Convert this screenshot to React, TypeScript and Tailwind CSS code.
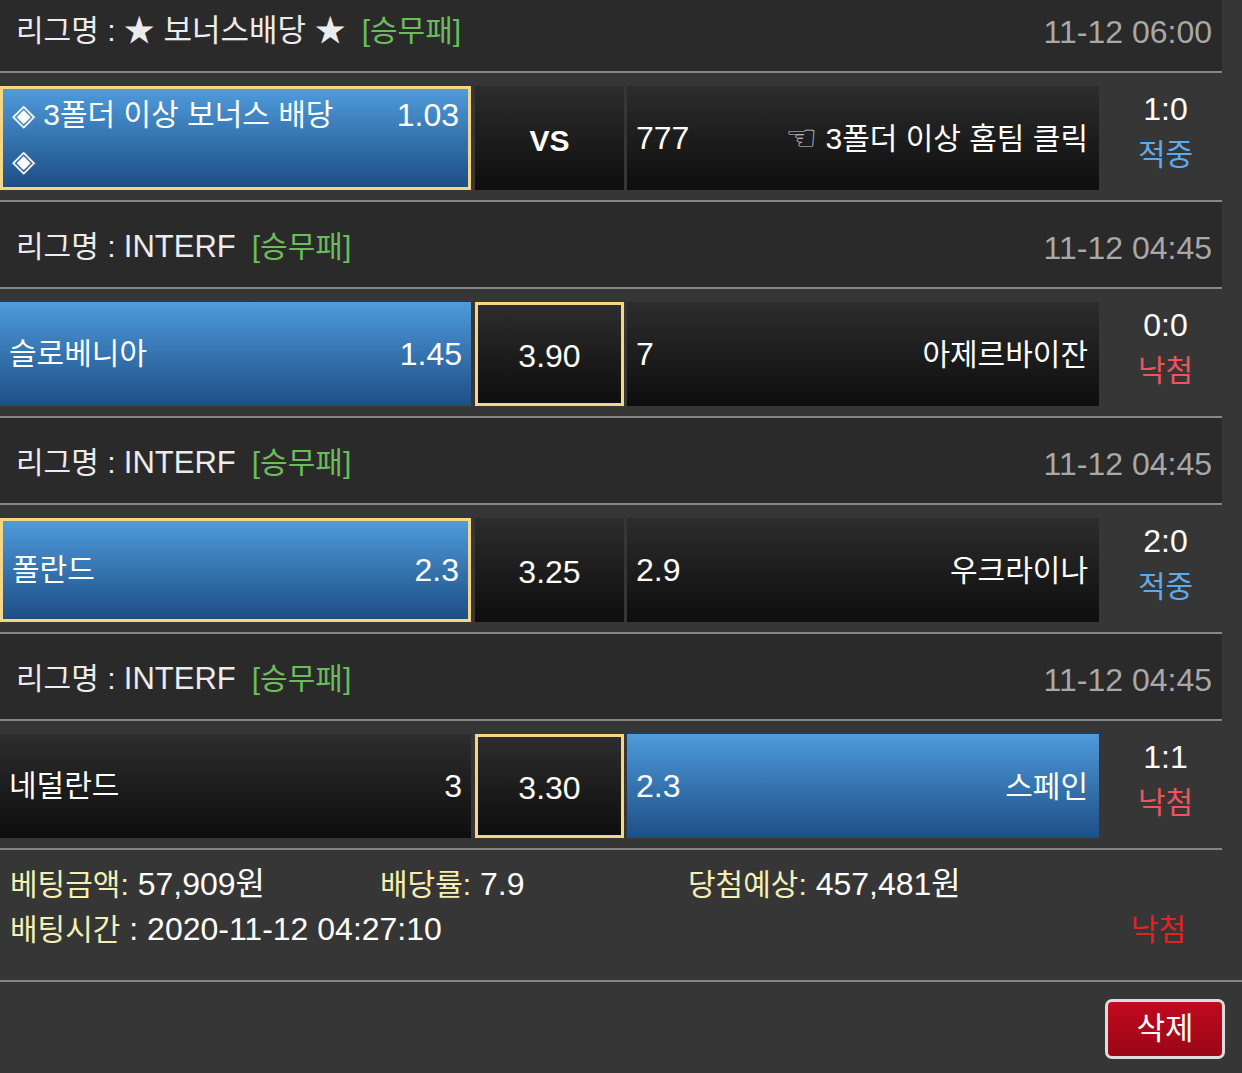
import React from 'react'

type Side = 'home' | 'draw' | 'away'

type Game = {
  league: string
  time: string
  home: string
  homeOdds: string
  draw: string
  away: string
  awayOdds: string
  score: string
  result: '적중' | '낙첨'
  pick: Side // blue cell
  border: Side | null // yellow frame
  hint?: string
}

const games: Game[] = [
  {
    league: '★ 보너스배당 ★',
    time: '11-12 06:00',
    home: '◈ 3폴더 이상 보너스 배당\n◈',
    homeOdds: '1.03',
    draw: 'VS',
    away: '3폴더 이상 홈팀 클릭',
    awayOdds: '777',
    score: '1:0',
    result: '적중',
    pick: 'home',
    border: 'home',
    hint: '☜',
  },
  {
    league: 'INTERF',
    time: '11-12 04:45',
    home: '슬로베니아',
    homeOdds: '1.45',
    draw: '3.90',
    away: '아제르바이잔',
    awayOdds: '7',
    score: '0:0',
    result: '낙첨',
    pick: 'home',
    border: 'draw',
  },
  {
    league: 'INTERF',
    time: '11-12 04:45',
    home: '폴란드',
    homeOdds: '2.3',
    draw: '3.25',
    away: '우크라이나',
    awayOdds: '2.9',
    score: '2:0',
    result: '적중',
    pick: 'home',
    border: 'home',
  },
  {
    league: 'INTERF',
    time: '11-12 04:45',
    home: '네덜란드',
    homeOdds: '3',
    draw: '3.30',
    away: '스페인',
    awayOdds: '2.3',
    score: '1:1',
    result: '낙첨',
    pick: 'away',
    border: 'draw',
  },
]

const blue = 'bg-gradient-to-b from-[#4f9bdb] to-[#1d4f86]'
const dark = 'bg-gradient-to-b from-[#2d2d2d] to-[#0e0e0e]'

function cellClass(g: Game, side: Side) {
  const bg = g.pick === side ? blue : dark
  const frame = g.border === side ? 'border-[3px] border-[#f6d584]' : ''
  return `${bg} ${frame} h-[104px] box-border`
}

function GameBlock({ g }: { g: Game }) {
  return (
    <div>
      <div className="flex h-[87px] w-[1222px] items-center justify-between border-b-2 border-[#858585] bg-[#2a2a2a] pt-[6px] pl-4 pr-[10px]">
        <div className="text-[#ececec]">
          리그명 : <span className="text-[31px]">{g.league}</span>
          <span className="ml-4 text-[#69bd5b]">[승무패]</span>
        </div>
        <div className="text-[32px] text-[#a8a8a8]">{g.time}</div>
      </div>

      <div className="flex w-[1222px] border-b-2 border-[#858585] pt-[13px] pb-[10px]">
        <div className={`${cellClass(g, 'home')} flex w-[471px] items-center pl-[9px] pr-[9px]`}>
          <div className="flex w-full items-start justify-between leading-[46px] text-white">
            <span className="whitespace-pre-line">{g.home}</span>
            <span className="text-[32px]">{g.homeOdds}</span>
          </div>
        </div>
        <div
          className={`${cellClass(g, 'draw')} ml-[4px] flex w-[149px] items-center justify-center pt-1 text-white ${
            g.draw === 'VS' ? 'text-[30px] font-bold' : 'text-[32px]'
          }`}
        >
          {g.draw}
        </div>
        <div className={`${cellClass(g, 'away')} ml-[3px] flex w-[472px] items-center justify-between pl-[9px] pr-[11px] text-white`}>
          <span className="text-[32px]">{g.awayOdds}</span>
          <span className="flex items-center">
            {g.hint && (
              <span className="mr-[8px] text-[36px] leading-none text-[#d0d0d0]" style={{ fontFamily: '"DejaVu Sans", sans-serif' }}>
                {g.hint}
              </span>
            )}
            {g.away}
          </span>
        </div>
        <div className="flex flex-1 flex-col items-center pl-[10px] leading-[46px]">
          <span className="text-[32px] text-white">{g.score}</span>
          <span className={g.result === '적중' ? 'text-[#5eaae8]' : 'text-[#e8575a]'}>{g.result}</span>
        </div>
      </div>
    </div>
  )
}

export default function App() {
  return (
    <div
      className="h-[1073px] w-[1242px] overflow-hidden bg-[#363636] text-[30px]"
      style={{ fontFamily: '"Liberation Sans", "Noto Sans CJK KR", sans-serif' }}
    >
      <div className="-mt-[14px]">
        {games.map((g, i) => (
          <GameBlock key={i} g={g} />
        ))}
      </div>

      <div className="border-b-2 border-[#858585] pt-[12px] pb-[28px] pl-[10px] pr-[56px] leading-[45px]">
        <div className="flex">
          <div className="w-[370px]">
            <span className="text-[#f4efb4]">베팅금액:</span>
            <span className="text-[32px] text-white"> 57,909원</span>
          </div>
          <div className="w-[308px]">
            <span className="text-[#f4efb4]">배당률:</span>
            <span className="text-[32px] text-white"> 7.9</span>
          </div>
          <div>
            <span className="text-[#f4efb4]">당첨예상:</span>
            <span className="text-[32px] text-white"> 457,481원</span>
          </div>
        </div>
        <div className="flex justify-between">
          <div>
            <span className="text-[#f4efb4]">배팅시간</span>
            <span className="text-[32px] text-white"> : 2020-11-12 04:27:10</span>
          </div>
          <span className="text-[#e42124]">낙첨</span>
        </div>
      </div>

      <div className="flex justify-end pt-[17px] pr-[17px]">
        <button
          type="button"
          className="flex h-[60px] w-[120px] items-center justify-center rounded-[7px] border-[3px] border-[#dcdcdc] bg-gradient-to-b from-[#c10a1f] to-[#9a0616] text-[31px] text-white"
        >
          삭제
        </button>
      </div>
    </div>
  )
}
